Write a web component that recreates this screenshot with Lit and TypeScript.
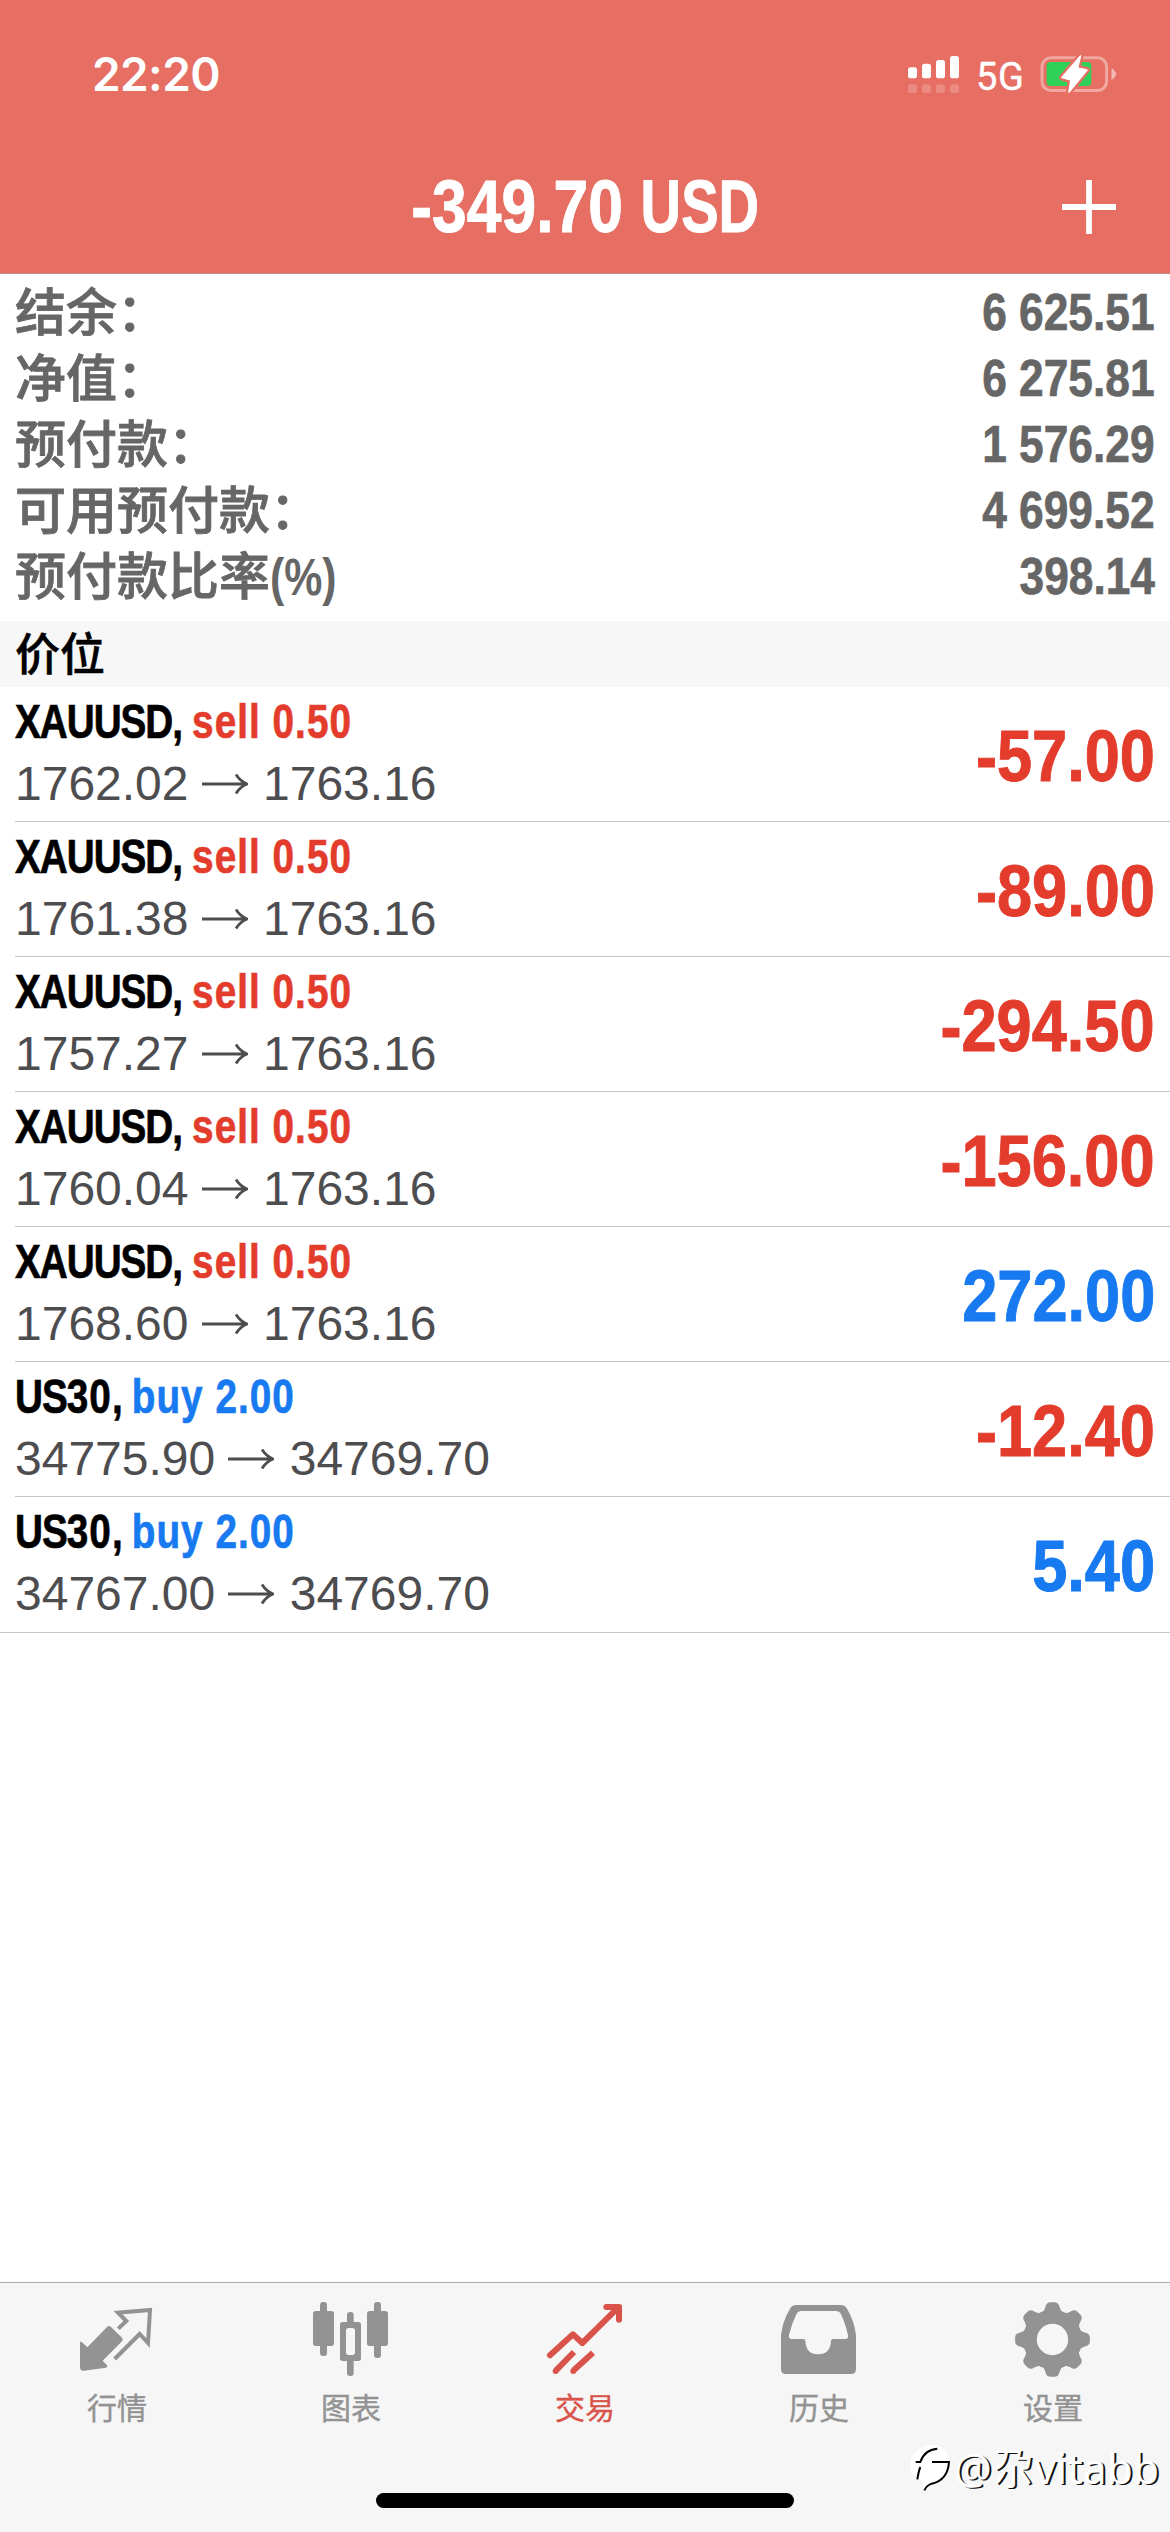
import { LitElement, html, css, svg } from "lit";
import { customElement, property } from "lit/decorators.js";
import { classMap } from "lit/directives/class-map.js";

interface Position {
  symbol: string;
  side: "sell" | "buy";
  volume: string;
  open: string;
  current: string;
  profit: string;
}

const summary: [string, string, string][] = [
  ["结余：", "", "6 625.51"],
  ["净值：", "", "6 275.81"],
  ["预付款：", "", "1 576.29"],
  ["可用预付款：", "", "4 699.52"],
  ["预付款比率", "(%)", "398.14"],
];

const positions: Position[] = [
  { symbol: "XAUUSD", side: "sell", volume: "0.50", open: "1762.02", current: "1763.16", profit: "-57.00" },
  { symbol: "XAUUSD", side: "sell", volume: "0.50", open: "1761.38", current: "1763.16", profit: "-89.00" },
  { symbol: "XAUUSD", side: "sell", volume: "0.50", open: "1757.27", current: "1763.16", profit: "-294.50" },
  { symbol: "XAUUSD", side: "sell", volume: "0.50", open: "1760.04", current: "1763.16", profit: "-156.00" },
  { symbol: "XAUUSD", side: "sell", volume: "0.50", open: "1768.60", current: "1763.16", profit: "272.00" },
  { symbol: "US30", side: "buy", volume: "2.00", open: "34775.90", current: "34769.70", profit: "-12.40" },
  { symbol: "US30", side: "buy", volume: "2.00", open: "34767.00", current: "34769.70", profit: "5.40" },
];

const tooth = svg`<path d="M-34 -76 Q-26 -84 -22 -95 L-19 -104 Q-15 -112 -8 -112 H8 Q15 -112 19 -104 L22 -95 Q26 -84 34 -76Z"/>`;

const tabs = [
  {
    label: "行情",
    box: "231 90 240 240",
    icon: svg`
      <path fill="currentColor" d="M240 216 Q244 214 248 218 L262 232 L321 171 Q327 165 333 171 L366 203 Q371 208 366 214 L308 272 L321 285 Q324 291 318 293 L252 302 Q240 304 240 292Z"/>
      <path fill="none" stroke="currentColor" stroke-width="12" d="M355 176 L379 153 L354 128 L450 120 L444 219 L419 192 L344 267"/>`,
  },
  {
    label: "图表",
    box: "933 90 240 240",
    icon: svg`
      <g fill="currentColor">
        <rect x="939" y="123" width="63" height="105" rx="8"/><rect x="960" y="96" width="21" height="162" rx="9"/>
        <rect x="1101" y="123" width="63" height="105" rx="8"/><rect x="1122" y="96" width="21" height="168" rx="9"/>
        <rect x="1041" y="126" width="20" height="40" rx="9"/><rect x="1041" y="262" width="20" height="56" rx="9"/>
        <path fill-rule="evenodd" d="M1028 156H1075Q1083 156 1083 164V265Q1083 273 1075 273H1028Q1020 273 1020 265V164Q1020 156 1028 156ZM1046 174Q1038 174 1038 182V247Q1038 255 1046 255H1057Q1065 255 1065 247V182Q1065 174 1057 174Z"/>
      </g>`,
  },
  {
    label: "交易",
    box: "375 90 240 240",
    icon: svg`
      <g fill="none" stroke="currentColor" stroke-width="18" stroke-linecap="round" stroke-linejoin="round">
        <path d="M390 256 L459 193 L487 219 L595 112"/><path d="M559 111H597V149"/>
      </g>
      <path fill="currentColor" d="M578 104H600Q606 104 606 110V135Z"/>
      <path fill="none" stroke="currentColor" stroke-width="18" d="M408 301 L462 246M461 301 L519 248"/>
      <circle fill="currentColor" cx="407" cy="303" r="9"/><circle fill="currentColor" cx="460" cy="303" r="9"/>`,
  },
  {
    label: "历史",
    box: "117 90 240 240",
    icon: svg`
      <path fill="currentColor" fill-rule="evenodd" d="M168 105H303Q315 105 321 116Q343 153 348 195V298Q348 312 334 312H137Q123 312 123 298V195Q128 153 150 116Q156 105 168 105ZM185 123Q174 123 169 133Q156 160 147 194Q145 207 155 207H190Q196 207 196 213Q198 253 234 253Q271 253 273 213Q273 207 279 207H317Q326 207 324 196Q316 160 303 133Q298 123 287 123Z"/>`,
  },
  {
    label: "设置",
    box: "819 90 240 240",
    icon: svg`
      <g fill="currentColor" transform="translate(937.5 208.5)">
        <path fill-rule="evenodd" d="M0 -89A89 89 0 1 1 0 89A89 89 0 1 1 0 -89ZM0 -47A47 47 0 1 0 0 47A47 47 0 1 0 0 -47Z"/>
        ${[0, 45, 90, 135, 180, 225, 270, 315].map((a) => svg`<g transform=${`rotate(${a})`}>${tooth}</g>`)}
      </g>`,
  },
];

@customElement("status-bar")
export class StatusBar extends LitElement {
  static styles = css`
    :host { display: flex; justify-content: space-between; height: 144px; color: #fff; }
    .time { padding-left: 92px; font: 600 46px/149px Inter, sans-serif; letter-spacing: -0.6px; }
    .right { display: flex; padding: 50px 50px 0 0; height: 50px; }
    .net { font: 400 38px/50px Roboto, sans-serif; width: 62px; padding: 2px 0 0 1px; letter-spacing: 0.6px; -webkit-text-stroke: 0.4px currentColor; }
    svg { display: block; }
    .signal { width: 68px; height: 50px; }
    .battery { width: 82px; height: 50px; }
  `;
  render() {
    const bars = [[907, 67.3], [921, 63.7], [935, 60], [949, 56]];
    return html`
      <div class="time">22:20</div>
      <div class="right">
        <svg class="signal" viewBox="906 50 68 50" fill="#fff">
          ${bars.map(([x, y]) => svg`
            <rect x=${x} y=${y} width="9" height=${78.3 - y} rx="2.6"/>
            <rect x=${x} y="84.3" width="9" height="8.7" rx="2.6" opacity=".2"/>`)}
        </svg>
        <div class="net">5G</div>
        <svg class="battery" viewBox="1038 50 82 50">
          <rect x="1042" y="57.7" width="64.6" height="32.8" rx="9" fill="none" stroke="#fff" stroke-opacity=".4" stroke-width="3"/>
          <path d="M1111.5 68Q1116 71 1116 74Q1116 77 1111.5 80Z" fill="#fff" opacity=".5"/>
          <rect x="1046.6" y="62" width="44.7" height="24" rx="4" fill="#30d158"/>
          <path d="M1080.5 56L1062 77.5L1071 80L1069 92L1087 70L1077.5 68Z" fill="#fff" stroke="#e66e63" stroke-width="6" stroke-linejoin="round"/>
          <path d="M1080.5 56L1062 77.5L1071 80L1069 92L1087 70L1077.5 68Z" fill="#fff" stroke="#fff" stroke-width="1.6" stroke-linejoin="round"/>
        </svg>
      </div>`;
  }
}

@customElement("position-row")
export class PositionRow extends LitElement {
  @property({ attribute: false }) item!: Position;
  @property({ type: Boolean }) last = false;
  static styles = css`
    :host { display: block; padding-left: 15px; }
    .row { display: flex; justify-content: space-between; box-sizing: border-box; height: 135px; padding: 3px 15px 5px 0; border-bottom: 1px solid #c6c6c8; }
    .row.last { border-bottom-color: transparent; }
    .head { height: 62px; font: 700 49px/62px "Liberation Sans", sans-serif; white-space: pre; display: flex; transform: scaleX(0.79); transform-origin: left center; -webkit-text-stroke: 0.7px currentColor; }
    .sym { color: #000; letter-spacing: 1.4px; }
    .letters { letter-spacing: -1.3px; }
    .side { margin-left: 10px; letter-spacing: 1.3px; }
    .sell, .loss { color: #e33c2c; }
    .buy, .gain { color: #177af0; }
    .prices { display: flex; align-items: center; height: 64px; font: 400 48px/64px "Liberation Sans", sans-serif; color: #4d4d50; }
    .arrow { width: 46px; height: 24px; margin: 0 15.5px 0 13px; }
    .profit { font: 700 73px/131px "Liberation Sans", sans-serif; transform: scaleX(0.865); transform-origin: right center; -webkit-text-stroke: 1px currentColor; }
  `;
  render() {
    const p = this.item;
    const loss = p.profit.startsWith("-");
    const letters = p.symbol.replace(/\d+$/, "");
    return html`
      <div class=${classMap({ row: true, last: this.last })}>
        <div>
          <div class="head"><span class="sym"><span class="letters">${letters}</span>${p.symbol.slice(letters.length)},</span><span class=${classMap({ side: true, [p.side]: true })}>${p.side} ${p.volume}</span></div>
          <div class="prices">
            <span>${p.open}</span>
            <svg class="arrow" viewBox="0 0 46 24" fill="none" stroke="currentColor" stroke-width="2.8"><path d="M0 12H44M34 2.5Q38 9 45 12Q38 15 34 21.5"/></svg>
            <span>${p.current}</span>
          </div>
        </div>
        <div class=${classMap({ profit: true, loss, gain: !loss })}>${p.profit}</div>
      </div>`;
  }
}

@customElement("tab-bar")
export class TabBar extends LitElement {
  static styles = css`
    :host { display: flex; flex-direction: column; align-items: center; box-sizing: border-box; height: 250px; background: #f6f6f6; border-top: 1px solid #a9a9a9; }
    .tabs { display: grid; grid-template-columns: repeat(5, 1fr); width: 100%; height: 210px; }
    .tab { display: flex; flex-direction: column; align-items: center; padding-top: 17px; color: #939393; }
    .tab.active { color: #d9534a; }
    .tab svg { width: 80px; height: 80px; }
    .label { font: 400 30px/44px "Noto Sans CJK SC", sans-serif; margin-top: 4px; -webkit-text-stroke: 0.4px currentColor; }
    .home { width: 418px; height: 15px; border-radius: 8px; background: #000; }
  `;
  render() {
    return html`
      <div class="tabs">
        ${tabs.map((t, i) => html`
          <div class=${classMap({ tab: true, active: i === 2 })}>
            <svg viewBox=${t.box}>${t.icon}</svg>
            <div class="label">${t.label}</div>
          </div>`)}
      </div>
      <div class="home"></div>`;
  }
}

@customElement("app-root")
export class AppRoot extends LitElement {
  static styles = css`
    :host { display: flex; flex-direction: column; position: relative; width: 1170px; height: 2532px; overflow: hidden; background: #fff; }
    .header { box-sizing: border-box; height: 274px; background: #e66e63; border-bottom: 1px solid #b98d88; }
    .nav { display: grid; grid-template-columns: 1fr auto 1fr; align-items: center; height: 126px; color: #fff; }
    .title { grid-column: 2; font: 700 74px/126px "Liberation Sans", sans-serif; white-space: pre; transform: scaleX(0.843); -webkit-text-stroke: 1px currentColor; }
    .currency { display: inline-block; transform: scaleX(0.9); transform-origin: left center; margin-right: -16px; }
    .plus { justify-self: end; width: 54px; height: 54px; margin-right: 54px; }
    .summary { box-sizing: border-box; height: 347px; padding: 5px 15px 0; color: #666; }
    .line { display: flex; justify-content: space-between; height: 66px; }
    .name { display: flex; padding-top: 2px; font: 500 51px/66px "Liberation Sans", "Noto Sans CJK SC", sans-serif; -webkit-text-stroke: 0.8px currentColor; }
    .unit { font-weight: 700; transform: scaleX(0.84); transform-origin: left center; -webkit-text-stroke: 0; }
    .value { font: 700 51px/68px "Liberation Sans", sans-serif; transform: scaleX(0.868); transform-origin: right center; -webkit-text-stroke: 0.7px currentColor; }
    .section { height: 66px; padding-left: 15px; background: #f7f7f7; color: #000; font: 500 45px/70px "Liberation Sans", "Noto Sans CJK SC", sans-serif; -webkit-text-stroke: 0.5px currentColor; }
    .list { flex: 1; }
    .end { height: 1px; background: #c6c6c8; }
    .mark { position: absolute; left: 909px; top: 2443px; display: flex; align-items: center; height: 50px; color: #fff; white-space: nowrap; font: 400 42px/50px "Noto Sans", "Noto Sans CJK SC", sans-serif; letter-spacing: 0.4px; text-shadow: 2px 1px 0 #111; }
    .mark svg { width: 45px; height: 50px; }
  `;
  render() {
    return html`
      <div class="header">
        <status-bar></status-bar>
        <div class="nav">
          <div class="title">-349.70 <span class="currency">USD</span></div>
          <svg class="plus" viewBox="0 0 54 54" stroke="#fff" stroke-width="5.8"><path d="M0 27H54M27 0V54"/></svg>
        </div>
      </div>
      <div class="summary">
        ${summary.map(([name, unit, value]) => html`
          <div class="line">
            <div class="name"><span>${name}</span>${unit ? html`<span class="unit">${unit}</span>` : ""}</div>
            <div class="value">${value}</div>
          </div>`)}
      </div>
      <div class="section">价位</div>
      <div class="list">
        ${positions.map((p, i) => html`<position-row .item=${p} ?last=${i === positions.length - 1}></position-row>`)}
        <div class="end"></div>
      </div>
      <tab-bar></tab-bar>
      <div class="mark">
        <svg viewBox="507 528 135 150">
          <path fill="#fff" d="M570 534Q600 530 618 556Q634 580 627 603Q620 640 585 650Q565 655 552 672L548 640Q512 630 510 595Q510 545 570 534Z"/>
          <path fill="none" stroke="#000" stroke-width="6" d="M527 585H541Q553 548 592 545M541 600Q536 612 532 637M576 585H627Q623 640 575 650Q560 655 553 670"/>
        </svg>
        <span>@尕vitabb</span>
      </div>`;
  }
}
